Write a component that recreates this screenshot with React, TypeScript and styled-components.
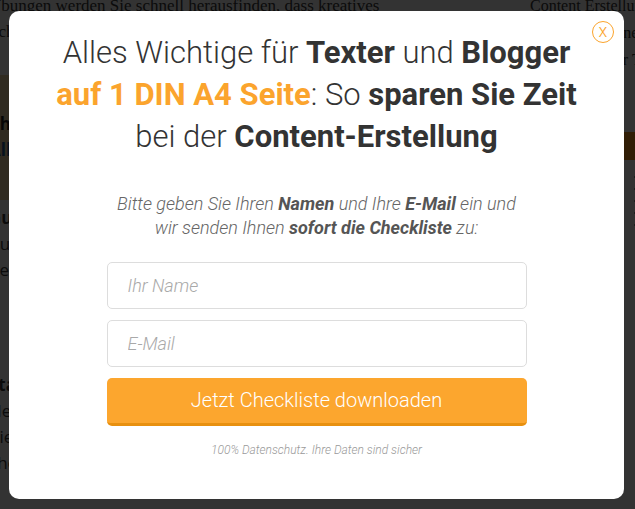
import styled, { createGlobalStyle } from "styled-components";

const GlobalStyle = createGlobalStyle`
  html, body {
    margin: 0;
    padding: 0;
  }
  body {
    width: 635px;
    height: 509px;
    overflow: hidden;
    background: #fff;
  }
`;

// blog page that sits dimmed behind the popup
const mainLines = [
  "Übungen werden Sie schnell herausfinden, dass kreatives",
  "Schreiben keine Hexerei ist, sondern ein Handwerk.",
];
const afterBox = [
  "Gute Texte entstehen nicht zufällig",
  "Außerdem hilft eine feste Struktur beim Schreiben",
  "denn sie spart Zeit und Nerven.",
];
const lastBlock = [
  "Startklar für den nächsten Artikel",
  "Nehmen Sie sich die Checkliste zur Hand",
  "die Ihnen jeden Schritt zeigt",
  "checken Sie Punkt für Punkt ab.",
];
const sideLines = [
  "Content Erstellung",
  "So gelingen Ihnen Texte, die überzeugen",
  "Gratis-Kurs für Texter und Autoren",
];
const sideList = ["", "", "", "", ""];

function BlogPage() {
  return (
    <Page>
      <Main>
        {mainLines.map((l) => (
          <Line key={l}>{l}</Line>
        ))}
        <Callout>
          <Line $bold>Checkliste für Texter und Blogger</Line>
          <CalloutLink>Alles auf einer Seite</CalloutLink>
        </Callout>
        <Block $gap={5}>
          {afterBox.map((l, i) => (
            <Line key={l} $bold={i === 0}>
              {l}
            </Line>
          ))}
        </Block>
        <Block $gap={89}>
          {lastBlock.map((l, i) => (
            <Line key={l} $bold={i === 0}>
              {l}
            </Line>
          ))}
        </Block>
      </Main>
      <Aside>
        {sideLines.map((l) => (
          <Line key={l}>{l}</Line>
        ))}
        <SideButton>Weiterlesen</SideButton>
        <SideList>
          {sideList.map((_, i) => (
            <SideItem key={i} />
          ))}
        </SideList>
      </Aside>
    </Page>
  );
}

export default function App() {
  return (
    <>
      <GlobalStyle />
      <BlogPage />
      <Overlay>
        <Modal>
          <Close aria-label="Schließen">x</Close>
          <Heading>
            Alles Wichtige für <strong>Texter</strong> und <strong>Blogger</strong>{" "}
            <Accent>auf 1 DIN A4 Seite</Accent>: So <strong>sparen Sie Zeit</strong> bei der{" "}
            <strong>Content-Erstellung</strong>
          </Heading>
          <Intro>
            Bitte geben Sie Ihren <strong>Namen</strong> und Ihre <strong>E-Mail</strong> ein und
            wir senden Ihnen <strong>sofort die Checkliste</strong> zu:
          </Intro>
          <Form onSubmit={(e) => e.preventDefault()}>
            <Field type="text" placeholder="Ihr Name" />
            <Field type="email" placeholder="E-Mail" />
            <Submit type="submit">Jetzt Checkliste downloaden</Submit>
          </Form>
          <Note>100% Datenschutz. Ihre Daten sind sicher</Note>
        </Modal>
      </Overlay>
    </>
  );
}

const Page = styled.div`
  display: grid;
  grid-template-columns: 530px 1fr;
  width: 635px;
  height: 509px;
  overflow: hidden;
  font-family: "Liberation Serif", serif;
  font-size: 17px;
  line-height: 26px;
  color: #3a3a3a;
`;

const Main = styled.main`
  margin: -7px 0 0 -11px;
  min-width: 0;
`;

const Line = styled.div<{ $bold?: boolean }>`
  white-space: nowrap;
  font-weight: ${(p) => (p.$bold ? 700 : 400)};
`;

const Callout = styled.div`
  margin-top: 30px;
  height: 125px;
  box-sizing: border-box;
  padding-top: 36px;
  background: #f1d8a6;
  font-family: "Open Sans", sans-serif;
  color: #1c1c1c;
`;

const CalloutLink = styled.div`
  font-weight: 700;
  color: #1f5b98;
  white-space: nowrap;
`;

const Block = styled.div<{ $gap: number }>`
  margin-top: ${(p) => p.$gap}px;
  font-family: "Open Sans", sans-serif;
`;

const Aside = styled.aside`
  margin-top: -8px;
  min-width: 0;
  font-size: 16px;
  line-height: 27px;
`;

const SideButton = styled.div`
  margin-top: 59px;
  height: 28px;
  padding-left: 8px;
  background: #f5961e;
  color: #fff;
  line-height: 28px;
  white-space: nowrap;
`;

const SideList = styled.ul`
  list-style: none;
  margin: 16px 0 0;
  padding: 0 0 0 104px;
  display: flex;
  flex-direction: column;
  gap: 10px;
`;

const SideItem = styled.li`
  height: 2px;
  background: #999;
`;

const Overlay = styled.div`
  position: fixed;
  inset: 0;
  display: flex;
  align-items: center;
  justify-content: center;
  padding-right: 2px;
  background: rgba(0, 0, 0, 0.8);
`;

const Modal = styled.div`
  position: relative;
  width: 615px;
  box-sizing: border-box;
  padding: 21px 40px 41px;
  background: #fff;
  border-radius: 10px;
  text-align: center;
  font-family: Roboto, "Liberation Sans", sans-serif;
`;

const Close = styled.button`
  position: absolute;
  top: 10px;
  right: 10px;
  width: 22px;
  height: 22px;
  padding: 0 0 2px;
  box-sizing: border-box;
  border: 1px solid #fba42d;
  border-radius: 50%;
  background: transparent;
  color: #fba42d;
  font: 300 18px/1 Roboto, sans-serif;
  cursor: pointer;
`;

const Heading = styled.h2`
  margin: 0;
  font-size: 31px;
  line-height: 42px;
  font-weight: 300;
  color: #333;

  strong {
    font-weight: 700;
  }
`;

const Accent = styled.span`
  color: #fba42d;
  font-weight: 700;
`;

const Intro = styled.p`
  max-width: 420px;
  margin: 34px auto 0;
  font-size: 18px;
  line-height: 24px;
  font-style: italic;
  font-weight: 300;
  color: #666;

  strong {
    font-weight: 700;
    color: #555;
  }
`;

const Form = styled.form`
  display: flex;
  flex-direction: column;
  gap: 11px;
  width: 420px;
  margin: 22px auto 0;
`;

const Field = styled.input`
  height: 47px;
  box-sizing: border-box;
  padding: 0 20px;
  border: 1px solid #ddd;
  border-radius: 5px;
  font: italic 300 18px Roboto, sans-serif;
  color: #333;
  outline: none;

  &::placeholder {
    color: #a9a9a9;
  }
`;

const Submit = styled.button`
  height: 48px;
  border: none;
  border-bottom: 3px solid #e8900f;
  border-radius: 5px;
  background: #fca62e;
  color: #fff;
  font: 300 20px Roboto, sans-serif;
  cursor: pointer;
`;

const Note = styled.p`
  margin: 16px 0 0;
  font-size: 12px;
  line-height: 16px;
  font-style: italic;
  font-weight: 300;
  color: #999;
`;
